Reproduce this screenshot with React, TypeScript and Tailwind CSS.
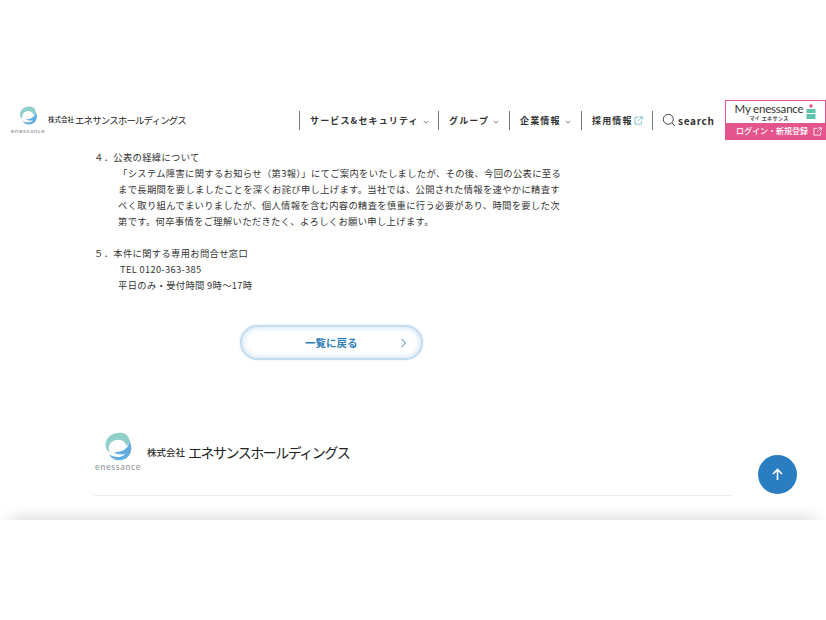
import React from "react";

const Mark = ({ size }: { size: number }) => (
  <svg width={size} height={size} viewBox="0 0 40 40" className="shrink-0">
    <path d="M24 1C13 0 3 6 2 17c-.4 5 2 9 6 11-3-6-1-13 5-16 6-2.500 13-1 16 3 1 1 2 3 2 5 2-2 4-5 4-9C34 5 30 2 24 1Z" fill="#8fd0c8" />
    <path d="M34 11c4 5 5 13 2 19-3 6-9 9-15 9-6 0-11-3-14-8 5 3 11 4 16 3 3-1 5-2 6-4-5 2-11 1-15-2 6 0 13-2 17-6 3-3 4-7 3-11Z" fill="#62ade0" />
  </svg>
);

const Chevron = () => (
  <svg width="6" height="6" viewBox="0 0 8 8" className="ml-[4px] mt-[2px] shrink-0" fill="none" stroke="#555" strokeWidth="1">
    <path d="M1 2.500 4 5.500 7 2.500" />
  </svg>
);

const External = ({ color }: { color: string }) => (
  <svg width="9" height="9" viewBox="0 0 10 10" className="shrink-0" fill="none" stroke={color} strokeWidth="0.9">
    <path d="M5 1.500H1v7.500h7.500V5.500M6 .8h3.200V4M9 1 4.500 5.500" />
  </svg>
);

const Sep = () => <div className="h-[19px] w-px shrink-0 bg-[#777]" />;

const NavItem = ({ children, w }: { children: React.ReactNode; w: string }) => (
  <div className={`mt-px flex shrink-0 items-center whitespace-nowrap pl-[10px] text-[9px] font-bold tracking-[1.15px] text-[#333] ${w}`}>{children}</div>
);

export default function App() {
  return (
    <div
      className="relative h-[620px] w-[826px] overflow-hidden bg-white"
      style={{ fontFamily: '"Noto Sans CJK JP", "Noto Sans", sans-serif' }}
    >
      <div className="h-[100px]" />
      <header className="flex h-[40px] items-center">
        <div className="flex w-[299px] shrink-0 items-center whitespace-nowrap pl-[12px]">
          <div className="flex w-[32px] shrink-0 flex-col items-center">
            <Mark size={19} />
            <span className="mt-[2px] text-[6.5px] leading-[7px] tracking-[0.55px] text-[#8a9298]" style={{ fontFamily: '"Lato", sans-serif' }}>enessance</span>
          </div>
          <span className="ml-[4px] text-[6.5px] font-medium text-[#333]">株式会社</span>
          <span className="ml-[1px] text-[9.5px] tracking-[-0.9px] text-[#222]">エネサンスホールディングス</span>
        </div>
        <Sep />
        <NavItem w="w-[138px]">サービス&amp;セキュリティ<Chevron /></NavItem>
        <Sep />
        <NavItem w="w-[70px]">グループ<Chevron /></NavItem>
        <Sep />
        <NavItem w="w-[71px]">企業情報<Chevron /></NavItem>
        <Sep />
        <NavItem w="w-[70px]"><span className="mr-[1px]">採用情報</span><External color="#68b4c8" /></NavItem>
        <Sep />
        <div className="flex w-[72px] shrink-0 items-center pl-[9px]">
          <svg width="14" height="14" viewBox="0 0 14 14" className="shrink-0" fill="none" stroke="#444" strokeWidth="1">
            <circle cx="6.300" cy="6.300" r="5" />
            <path d="m10 10 3 3" />
          </svg>
          <span className="ml-[2px] text-[10px] font-bold tracking-[0.7px] text-[#333]">search</span>
        </div>
        <div className="flex h-[40px] w-[101px] shrink-0 flex-col whitespace-nowrap border border-[#e4558b]">
          <div className="flex h-[22px] shrink-0 items-center pl-[8px]">
            <div className="flex w-[70px] shrink-0 flex-col items-center">
              <span className="text-[11.5px] leading-[12px] tracking-[-0.2px] text-[#333]" style={{ fontFamily: '"Lato", sans-serif' }}>My enessance</span>
              <span className="text-[5px] font-bold leading-[6px] tracking-[0.4px] text-[#444]">マイ エネサンス</span>
            </div>
            <svg width="10" height="16" viewBox="0 0 10 16" className="ml-[2px] shrink-0">
              <rect x="0.500" y="5" width="9" height="4" fill="#5fc2ae" />
              <rect x="0.500" y="10" width="9" height="5" fill="#5fc2ae" />
              <circle cx="5" cy="2" r="1.800" fill="#e4558b" />
            </svg>
          </div>
          <div className="flex flex-1 items-center justify-between bg-[#e4558b] pl-[10px] pr-[3px]">
            <span className="text-[8px] font-medium text-white">ログイン・新規登録</span>
            <External color="#ffffff" />
          </div>
        </div>
      </header>

      <main className="ml-[94px] mt-[9px] whitespace-nowrap text-[9.3px] leading-[16px] tracking-[0.33px] text-[#333]">
        <p>４．公表の経緯について</p>
        <div className="pl-[24px]">
          <p>「システム障害に関するお知らせ（第3報）」にてご案内をいたしましたが、その後、今回の公表に至る</p>
          <p>まで長期間を要しましたことを深くお詫び申し上げます。当社では、公開された情報を速やかに精査す</p>
          <p>べく取り組んでまいりましたが、個人情報を含む内容の精査を慎重に行う必要があり、時間を要した次</p>
          <p>第です。何卒事情をご理解いただきたく、よろしくお願い申し上げます。</p>
        </div>
        <p className="mt-[16px]">５．本件に関する専用お問合せ窓口</p>
        <div className="pl-[24px]">
          <p className="pl-[2px]">TEL 0120-363-385</p>
          <p>平日のみ・受付時間 9時～17時</p>
        </div>
      </main>

      <div className="ml-[240px] mt-[32px] flex h-[35px] w-[183px] items-center rounded-full border-2 border-[#c4dcef] bg-white shadow-[inset_0_0_6px_rgba(120,180,230,0.45),0_0_2px_rgba(120,180,230,0.4)]">
        <span className="ml-[63px] w-[52px] whitespace-nowrap text-[10.5px] font-bold tracking-[0px] text-[#2f7fb8]">一覧に戻る</span>
        <svg width="7" height="10" viewBox="0 0 7 10" className="ml-[43px] shrink-0" fill="none" stroke="#2f7fb8" strokeWidth="1">
          <path d="m1.500 1 4 4-4 4" />
        </svg>
      </div>

      <footer className="ml-[94px] mt-[71px] w-[638px]">
        <div className="flex h-[42px] items-center whitespace-nowrap">
          <div className="flex w-[48px] shrink-0 flex-col items-center">
            <Mark size={29} />
            <span className="mt-[1px] text-[9px] leading-[10px] tracking-[0.6px] text-[#8a9298]" style={{ fontFamily: '"Lato", sans-serif' }}>enessance</span>
          </div>
          <span className="ml-[5px] text-[9.5px] font-medium text-[#333]">株式会社</span>
          <span className="ml-[3px] text-[14px] tracking-[-1.5px] text-[#222]">エネサンスホールディングス</span>
        </div>
        <div className="mt-[22px] h-px bg-[#eceef0]" />
      </footer>

      <div className="mt-[9px] h-[15px] overflow-hidden">
        <div className="mx-[10px] mt-[15px] h-[20px] shadow-[0_0_18px_rgba(0,0,0,0.2)]" />
      </div>

      <button className="absolute left-[758px] top-[455px] flex h-[39px] w-[39px] items-center justify-center rounded-full bg-[#2b7dc1]">
        <svg width="13" height="13" viewBox="0 0 13 13" fill="none" stroke="#fff" strokeWidth="1.600">
          <path d="M6.500 12V1.500M2 6l4.500-4.500L11 6" />
        </svg>
      </button>
    </div>
  );
}
